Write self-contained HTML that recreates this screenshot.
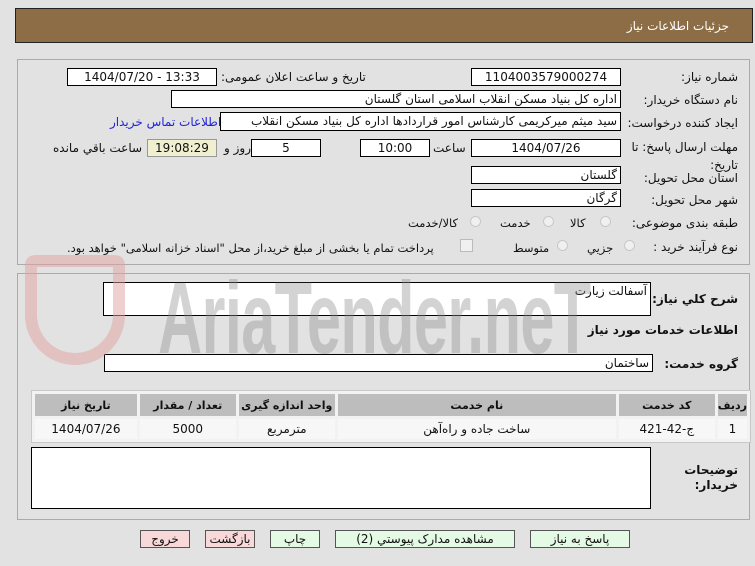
<!DOCTYPE html>
<html><head><meta charset="utf-8"><style>
body{margin:0;width:755px;height:566px;background:#e2e2e2;font-family:"DejaVu Sans","Liberation Sans",sans-serif;font-size:11.5px;color:#111;position:relative;overflow:hidden}
.a{position:absolute;white-space:nowrap}
.box{position:absolute;background:#fff;border:1px solid #000;box-sizing:border-box;text-align:center;line-height:16px;font-size:12px}
.r{text-align:right;padding-right:3px;direction:rtl;overflow:hidden}
.lbl{position:absolute;right:17px;direction:rtl;white-space:nowrap;font-size:12px}
.rad{position:absolute;width:11px;height:11px;border-radius:50%;border:1px solid #c8c8c8;background:#f0f0f0;box-sizing:border-box}
.btn{position:absolute;top:530px;height:18px;border:1px solid #555;box-sizing:border-box;text-align:center;font-size:12px;line-height:16px}
table{position:absolute;left:31px;top:390px;width:720px;border-collapse:separate;border-spacing:3px;border:1px solid #c8c8c8;background:#f2f2f2;direction:rtl}
th{background:#bdbdbd;height:22px;font-size:11px;font-weight:bold;padding:0}
td{background:#f7f7f7;height:20px;text-align:center;font-size:12px;padding:0}
</style></head><body>
<div class="a" style="left:15px;top:8px;width:738px;height:35px;background:#8c6d46;border:1px solid #222;box-sizing:border-box"></div>
<div class="a" style="right:26px;top:19px;color:#fff;font-size:12px;direction:rtl">جزئیات اطلاعات نیاز</div>

<div class="a" style="left:17px;top:59px;width:733px;height:206px;border:1px solid #aaa;box-sizing:border-box"></div>
<div class="a" style="left:17px;top:273px;width:733px;height:247px;border:1px solid #aaa;box-sizing:border-box"></div>

<div class="a" style="left:25px;top:255px;width:100px;height:110px;border:12px solid rgba(225,160,160,0.5);border-radius:10px 10px 50px 50px;box-sizing:border-box;z-index:5"></div>

<div class="lbl" style="top:70px">شماره نیاز:</div>
<div class="box" style="left:471px;top:68px;width:150px;height:18px">1104003579000274</div>
<div class="a" style="left:221px;top:70px;direction:rtl;font-size:12px">تاریخ و ساعت اعلان عمومی:</div>
<div class="box" style="left:67px;top:68px;width:150px;height:18px">1404/07/20 - 13:33</div>

<div class="lbl" style="top:93px">نام دستگاه خریدار:</div>
<div class="box r" style="left:171px;top:90px;width:450px;height:18px">اداره کل بنیاد مسکن انقلاب اسلامی استان گلستان</div>

<div class="lbl" style="top:116px">ایجاد کننده درخواست:</div>
<div class="box r" style="left:220px;top:112px;width:401px;height:19px">سید میثم میرکریمی کارشناس امور قراردادها اداره کل بنیاد مسکن انقلاب اسلامی</div>
<div class="a" style="left:110px;top:115px;color:#2222dd;direction:rtl;font-size:12px">اطلاعات تماس خریدار</div>

<div class="lbl" style="top:138px;line-height:18px;text-align:right">مهلت ارسال پاسخ: تا<br>تاریخ:</div>
<div class="box" style="left:471px;top:139px;width:150px;height:18px">1404/07/26</div>
<div class="a" style="left:433px;top:141px;font-size:12px">ساعت</div>
<div class="box" style="left:360px;top:139px;width:70px;height:18px">10:00</div>
<div class="box" style="left:251px;top:139px;width:70px;height:18px">5</div>
<div class="a" style="left:224px;top:141px;direction:rtl;font-size:12px">روز و</div>
<div class="box" style="left:147px;top:139px;width:70px;height:18px;background:#f0efcf;border-color:#999">19:08:29</div>
<div class="a" style="left:53px;top:141px;direction:rtl;font-size:12px">ساعت باقي مانده</div>

<div class="lbl" style="top:171px">استان محل تحویل:</div>
<div class="box r" style="left:471px;top:166px;width:150px;height:18px">گلستان</div>
<div class="lbl" style="top:193px">شهر محل تحویل:</div>
<div class="box r" style="left:471px;top:189px;width:150px;height:18px">گرگان</div>

<div class="lbl" style="top:216px">طبقه بندی موضوعی:</div>
<div class="rad" style="left:600px;top:216px"></div><div class="a" style="left:570px;top:216px">کالا</div>
<div class="rad" style="left:543px;top:216px"></div><div class="a" style="left:500px;top:216px">خدمت</div>
<div class="rad" style="left:470px;top:216px"></div><div class="a" style="left:408px;top:216px">کالا/خدمت</div>

<div class="lbl" style="top:240px">نوع فرآیند خرید :</div>
<div class="rad" style="left:624px;top:240px"></div><div class="a" style="left:587px;top:241px">جزيي</div>
<div class="rad" style="left:557px;top:240px"></div><div class="a" style="left:513px;top:241px">متوسط</div>
<div class="a" style="left:460px;top:239px;width:11px;height:11px;border:1px solid #bbb;background:#f0f0f0"></div>
<div class="a" style="left:67px;top:241px;direction:rtl">پرداخت تمام یا بخشی از مبلغ خرید،از محل "اسناد خزانه اسلامی" خواهد بود.</div>

<div class="lbl" style="top:292px;font-weight:bold">شرح کلي نياز:</div>
<div class="box r" style="left:103px;top:282px;width:548px;height:34px;text-align:right">آسفالت زیارت</div>
<div class="lbl" style="top:323px;font-weight:bold">اطلاعات خدمات مورد نیاز</div>
<div class="lbl" style="top:357px;font-weight:bold">گروه خدمت:</div>
<div class="box r" style="left:104px;top:354px;width:549px;height:18px">ساختمان</div>

<div class="a" style="left:158px;top:268px;font-size:102px;color:rgba(140,140,140,0.38);font-family:'Liberation Sans';font-weight:bold;transform:scaleX(0.6);transform-origin:left top;line-height:100px;letter-spacing:-1px;z-index:5">AriaTender.neT</div>

<table><tr><th style="width:27px">ردیف</th><th style="width:96px">کد خدمت</th><th style="width:278px">نام خدمت</th><th style="width:96px">واحد اندازه گیری</th><th style="width:96px">تعداد / مقدار</th><th>تاریخ نیاز</th></tr>
<tr><td>1</td><td>ج-42-421</td><td>ساخت جاده و راه‌آهن</td><td>مترمربع</td><td>5000</td><td>1404/07/26</td></tr></table>

<div class="box" style="left:31px;top:447px;width:620px;height:62px"></div>
<div class="lbl" style="top:463px;font-weight:bold;line-height:15px;text-align:right">توضیحات<br>خریدار:</div>

<div class="btn" style="left:140px;width:50px;background:#f8d8d8">خروج</div>
<div class="btn" style="left:205px;width:50px;background:#f8d8d8">بازگشت</div>
<div class="btn" style="left:270px;width:50px;background:#e4fae4">چاپ</div>
<div class="btn" style="left:335px;width:180px;background:#e4fae4">مشاهده مدارک پیوستي (2)</div>
<div class="btn" style="left:530px;width:100px;background:#e4fae4">پاسخ به نیاز</div>
</body></html>
